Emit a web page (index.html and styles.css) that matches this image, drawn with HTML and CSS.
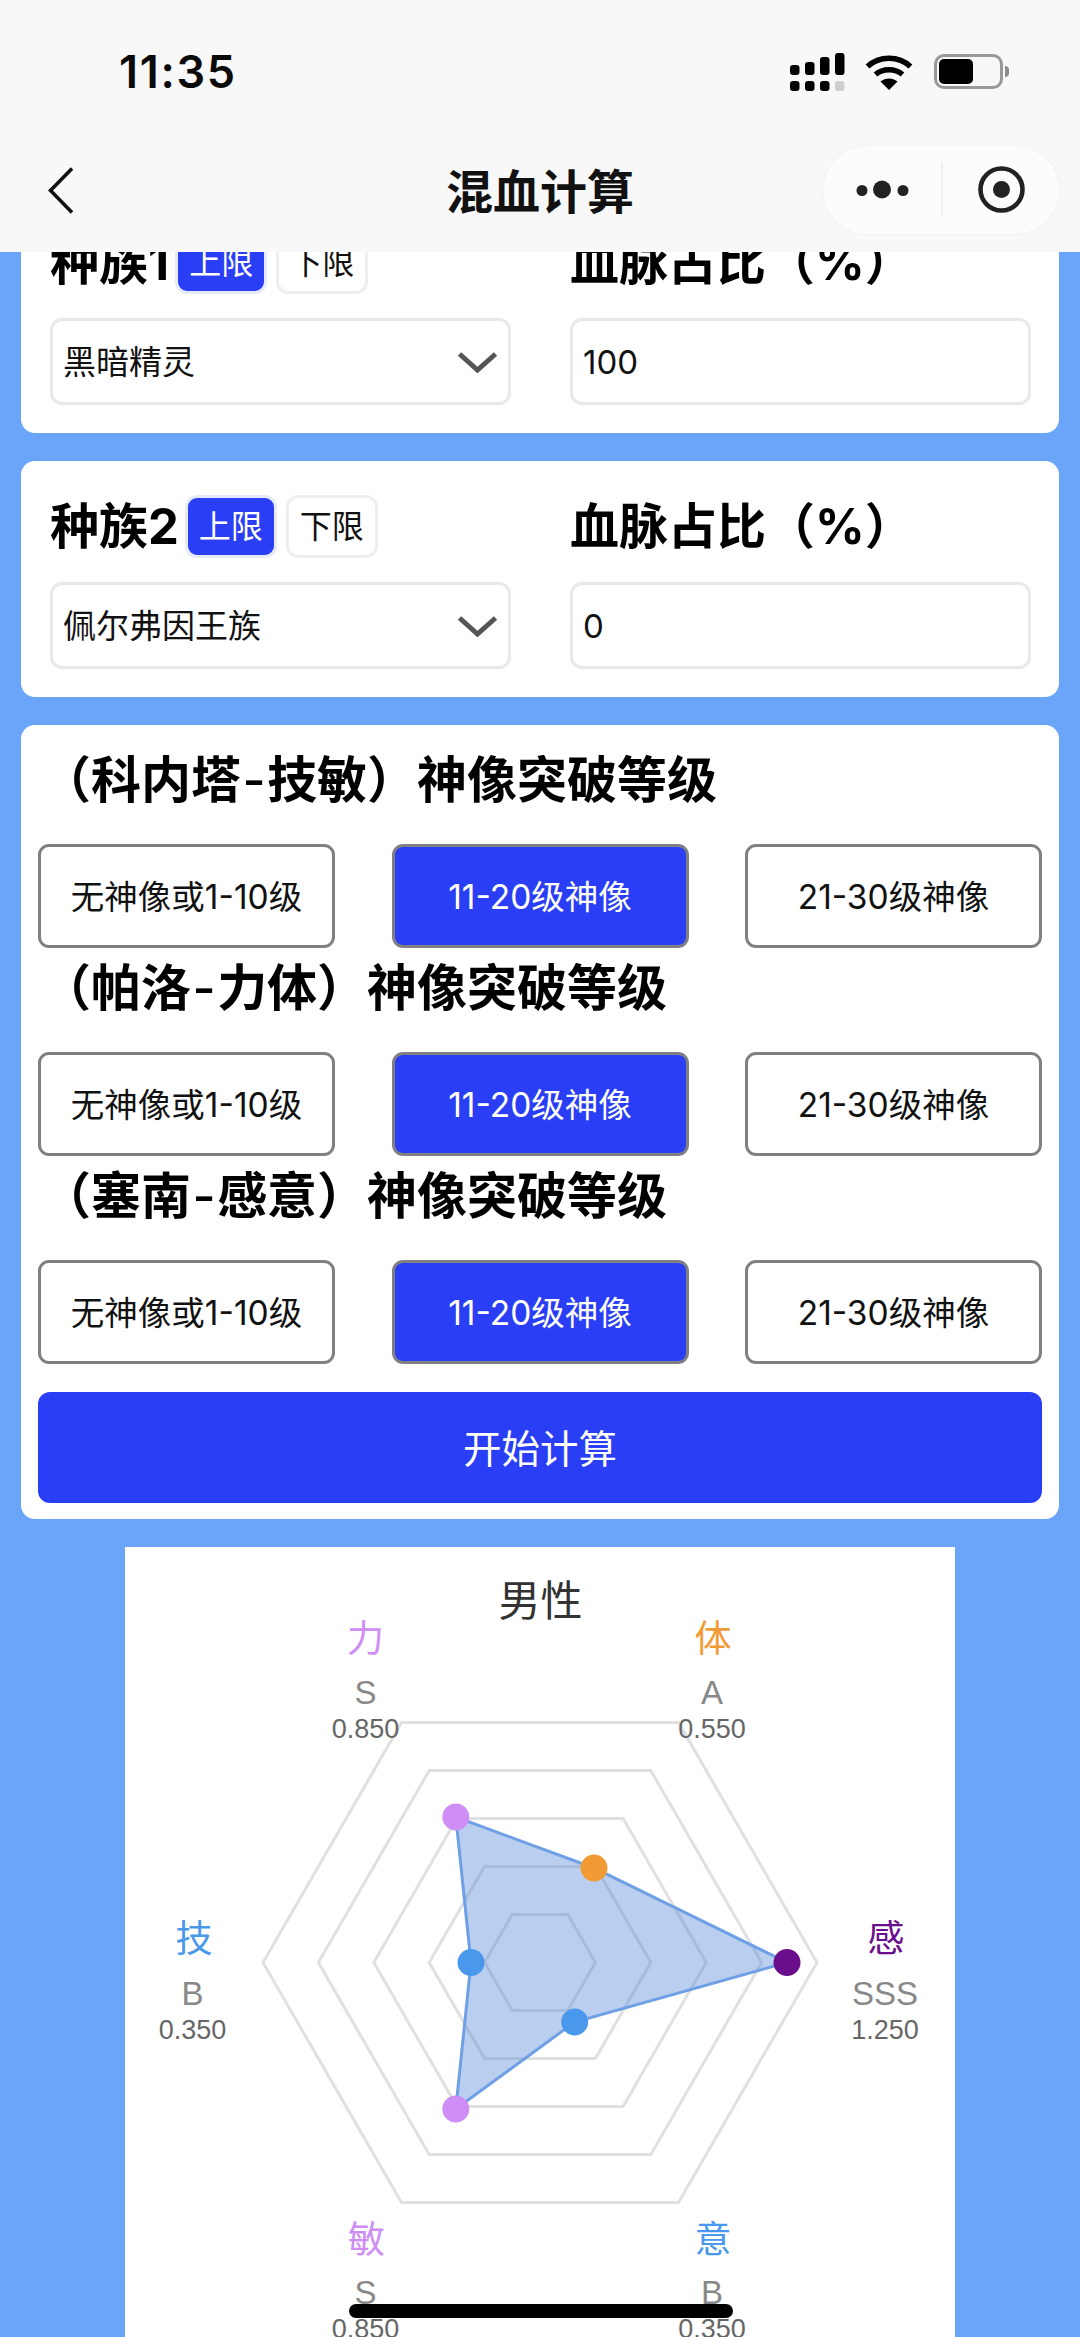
FILE: index.html
```html
<!DOCTYPE html>
<html lang="zh-CN">
<head>
<meta charset="utf-8">
<title>混血计算</title>
<link rel="stylesheet" href="styles.css">
</head>
<body>
<div class="app">
  <header class="top">
    <div class="status">
      <span class="time">11:35</span>
      <div class="status-icons">
        <svg class="signal" width="56" height="40" viewBox="0 0 56 40">
          <rect x="0" y="12" width="9.5" height="10" rx="3"/><rect x="15" y="9" width="9.5" height="13" rx="3"/><rect x="30" y="4" width="9.5" height="18" rx="3"/><rect x="45" y="0" width="9.5" height="22" rx="3"/>
          <rect x="0" y="28" width="9.5" height="10" rx="3"/><rect x="15" y="28" width="9.5" height="10" rx="3"/><rect x="30" y="28" width="9.5" height="10" rx="3"/><rect class="dim" x="45" y="28" width="9.5" height="10" rx="3"/>
        </svg>
        <svg class="wifi" width="48" height="36" viewBox="0 0 48 36">
          <path d="M2.5 11.5C14.5 0.5 33.5 0.5 45.5 11.5" fill="none" stroke="#000" stroke-width="5.5"/>
          <path d="M10.5 19.5C18 13 30 13 37.5 19.5" fill="none" stroke="#000" stroke-width="5.5"/>
          <path d="M15.5 26.5C20.5 22.5 27.5 22.5 32.5 26.5L24 35Z" fill="#000"/>
        </svg>
        <div class="battery"><div class="battery-level"></div></div>
        <div class="battery-nub"></div>
      </div>
    </div>
    <nav class="nav">
      <svg class="back" width="26" height="47" viewBox="0 0 26 47"><path d="M24 1.5L2.5 23.5L24 45.5" fill="none" stroke="#111" stroke-width="3.6"/></svg>
      <h1 class="title">混血计算</h1>
      <div class="capsule">
        <svg width="236" height="88" viewBox="0 0 236 88">
          <circle cx="39" cy="44.5" r="5.5" fill="#222"/><circle cx="59" cy="43.5" r="9" fill="#222"/><circle cx="80" cy="44.5" r="5.5" fill="#222"/>
          <line x1="119" y1="16" x2="119" y2="71" stroke="#ececec" stroke-width="1.5"/>
          <circle cx="178.500" cy="43.500" r="21" fill="none" stroke="#222" stroke-width="4.600"/><circle cx="178.500" cy="43.500" r="8.500" fill="#222"/>
        </svg>
      </div>
    </nav>
  </header>
  <main class="viewport">
    <div class="scroll">
      <section class="card race">
        <div class="field">
          <div class="label-row">
            <h2 class="label">种族1</h2>
            <div class="tags"><span class="tag active">上限</span><span class="tag">下限</span></div>
          </div>
          <div class="control select"><span>黑暗精灵</span><svg class="chev" width="41" height="22" viewBox="0 0 41 22"><path d="M2.500 3L20.500 19L38.500 3" fill="none" stroke="#555" stroke-width="5"/></svg></div>
        </div>
        <div class="field">
          <div class="label-row"><h2 class="label">血脉占比（%）</h2></div>
          <div class="control"><span>100</span></div>
        </div>
      </section>
      <section class="card race">
        <div class="field">
          <div class="label-row">
            <h2 class="label">种族2</h2>
            <div class="tags"><span class="tag active">上限</span><span class="tag">下限</span></div>
          </div>
          <div class="control select"><span>佩尔弗因王族</span><svg class="chev" width="41" height="22" viewBox="0 0 41 22"><path d="M2.500 3L20.500 19L38.500 3" fill="none" stroke="#555" stroke-width="5"/></svg></div>
        </div>
        <div class="field">
          <div class="label-row"><h2 class="label">血脉占比（%）</h2></div>
          <div class="control"><span>0</span></div>
        </div>
      </section>
      <section class="card levels">
        <h2 class="level-title">（科内塔<span class="dash">-</span>技敏）神像突破等级</h2>
        <div class="options"><button class="opt">无神像或1-10级</button><button class="opt on">11-20级神像</button><button class="opt">21-30级神像</button></div>
        <h2 class="level-title">（帕洛<span class="dash">-</span>力体）神像突破等级</h2>
        <div class="options"><button class="opt">无神像或1-10级</button><button class="opt on">11-20级神像</button><button class="opt">21-30级神像</button></div>
        <h2 class="level-title">（塞南<span class="dash">-</span>感意）神像突破等级</h2>
        <div class="options"><button class="opt">无神像或1-10级</button><button class="opt on">11-20级神像</button><button class="opt">21-30级神像</button></div>
        <button class="submit">开始计算</button>
      </section>
      <section class="chart">
        <svg width="830" height="790" viewBox="125 1548 830 790">
          <text class="chart-title" x="540.500" y="1617">男性</text>
          <g class="rings">
            <polygon points="817,1963.500 678.500,2203.400 401.500,2203.400 263,1963.500 401.500,1723.600 678.500,1723.600"/>
            <polygon points="761.600,1963.500 650.800,2155.400 429.200,2155.400 318.400,1963.500 429.200,1771.600 650.800,1771.600"/>
            <polygon points="706.200,1963.500 623.100,2107.400 456.900,2107.400 373.800,1963.500 456.900,1819.600 623.100,1819.600"/>
            <polygon points="650.800,1963.500 595.400,2059.500 484.600,2059.500 429.200,1963.500 484.600,1867.500 595.400,1867.500"/>
            <polygon points="595.400,1963.500 567.700,2011.500 512.300,2011.500 484.600,1963.500 512.300,1915.500 567.700,1915.500"/>
          </g>
          <polygon class="area" points="455.800,1818 594,1869 787,1963.500 574.700,2023 455.800,2110 471,1963.500"/>
          <circle cx="455.800" cy="1818" r="13.500" fill="#cf8ef5"/>
          <circle cx="594" cy="1869" r="13.500" fill="#f29b34"/>
          <circle cx="787" cy="1963.500" r="13.500" fill="#6a0e8c"/>
          <circle cx="574.700" cy="2023" r="13.500" fill="#4a98ec"/>
          <circle cx="455.800" cy="2110" r="13.500" fill="#cf8ef5"/>
          <circle cx="471" cy="1963.500" r="13.500" fill="#4a98ec"/>
          <g class="axis">
            <text class="axis-name" fill="#cf8ef5" x="365.500" y="1653">力</text><text class="grade" x="365.500" y="1705">S</text><text class="score" x="365.500" y="1738.500">0.850</text>
            <text class="axis-name" fill="#f29b34" x="713" y="1653">体</text><text class="grade" x="712" y="1705">A</text><text class="score" x="712" y="1738.500">0.550</text>
            <text class="axis-name" fill="#4a98ec" x="194" y="1953">技</text><text class="grade" x="192.500" y="2006">B</text><text class="score" x="192.500" y="2039.500">0.350</text>
            <text class="axis-name" fill="#6a0e8c" x="886" y="1953">感</text><text class="grade" x="885" y="2006">SSS</text><text class="score" x="885" y="2039.500">1.250</text>
            <text class="axis-name" fill="#cf8ef5" x="366.500" y="2253.500">敏</text><text class="grade" x="365.500" y="2305">S</text><text class="score" x="365.500" y="2338.500">0.850</text>
            <text class="axis-name" fill="#4a98ec" x="713" y="2253.500">意</text><text class="grade" x="712" y="2305">B</text><text class="score" x="712" y="2338.500">0.350</text>
          </g>
        </svg>
      </section>
    </div>
  </main>
  <div class="home-bar"></div>
</div>
</body>
</html>
```

FILE: styles.css
```css
* { box-sizing: border-box; }
html, body { margin: 0; padding: 0; }
body {
  width: 1080px;
  height: 2337px;
  overflow: hidden;
  font-family: Inter, "Noto Sans CJK SC", sans-serif;
  color: #000;
  background: #6aa5fa;
}
.app {
  position: relative;
  width: 1080px;
  height: 2337px;
  display: flex;
  flex-direction: column;
  overflow: hidden;
}
.top { flex: none; height: 252px; background: #f8f8f8; }
.status {
  height: 130px;
  padding: 53px 0 0 119px;
  display: flex;
  justify-content: space-between;
  align-items: flex-start;
}
.time {
  font-size: 45px;
  font-weight: 600;
  line-height: 38px;
  letter-spacing: 1.700px;
  color: #0a0a0a;
}
.status-icons { display: flex; align-items: flex-start; padding-right: 71px; }
.signal rect { fill: #000; }
.signal .dim { fill: #cfcfcf; }
.wifi { margin: 2px 0 0 19px; }
.battery {
  width: 69px;
  height: 35px;
  margin: 1px 0 0 21px;
  border: 3px solid #999;
  border-radius: 10px;
  padding: 2px;
}
.battery-level { width: 34px; height: 100%; background: #000; border-radius: 5px; }
.battery-nub {
  width: 4px;
  height: 11px;
  margin: 13px 0 0 2px;
  background: #8c8c8c;
  border-radius: 0 4px 4px 0;
}
.nav {
  height: 122px;
  display: grid;
  grid-template-columns: minmax(0, 1fr) auto minmax(0, 1fr);
  align-items: center;
}
.back { justify-self: start; margin: 0 0 2px 48px; }
.title {
  margin: 0 0 4px;
  font-family: "Noto Sans CJK SC", sans-serif;
  font-size: 47px;
  font-weight: 700;
  line-height: 60px;
  color: #111;
}
.capsule {
  justify-self: end;
  width: 236px;
  height: 88px;
  margin: 0 21px 2px 0;
  background: #fcfcfc;
  border-radius: 44px;
  box-shadow: 0 0 0 1px #f2f2f2;
}
.capsule svg { display: block; }

.viewport { flex: 1; overflow: hidden; }
.scroll { margin-top: -55px; display: flex; flex-direction: column; }
.card { width: 1038px; margin: 0 21px; background: #fff; border-radius: 14px; }
.race {
  height: 236px;
  margin-bottom: 28px;
  padding: 34px 27px 0 29px;
  display: grid;
  grid-template-columns: 461px 461px;
  column-gap: 59px;
}
.label-row { display: flex; align-items: center; height: 63px; margin-bottom: 24px; }
.label { margin: 0; font-size: 49px; font-weight: 700; line-height: 63px; white-space: nowrap; }
.tags { display: flex; gap: 9px; margin-left: 6px; }
.tag {
  width: 92px;
  height: 63px;
  border: 3px solid #eeeeee;
  border-radius: 12px;
  font-size: 32px;
  line-height: 57px;
  text-align: center;
  background: #fff;
  color: #111;
}
.tag.active { background: #2a3ff5; color: #fff; border-color: #e6eafd; }
.control {
  height: 87px;
  padding: 0 10px;
  display: flex;
  align-items: center;
  justify-content: space-between;
  border: 3px solid #e9e9e9;
  border-radius: 12px;
  font-size: 33px;
  color: #111;
}
.select { padding-bottom: 3px; }
.select .chev { margin-top: 3px; }

.levels { padding: 15px 17px 16px; margin-bottom: 28px; }
.level-title {
  margin: 0 0 25px;
  padding: 1px 0 0 3px;
  font-size: 50px;
  font-weight: 700;
  line-height: 78px;
  white-space: nowrap;
}
.dash { margin: 0 1.500px; font-weight: 500; }
.options { display: flex; justify-content: space-between; }
.opt {
  width: 297px;
  height: 104px;
  padding: 0 0 3px;
  border: 3px solid #808080;
  border-radius: 11px;
  background: #fff;
  color: #111;
  font-family: inherit;
  font-size: 33.500px;
}
.opt.on { background: #2a3ff5; color: #fff; }
.submit {
  display: block;
  width: 100%;
  height: 111px;
  margin-top: 28px;
  padding: 0 0 3px;
  border: none;
  border-radius: 12px;
  background: #2a3ff5;
  color: #fff;
  font-family: inherit;
  font-size: 38.500px;
}
.chart { width: 830px; height: 790px; margin: 0 auto; background: #fff; }
.chart svg { display: block; }
.chart text { text-anchor: middle; font-family: "Liberation Sans", "Noto Sans CJK SC", sans-serif; }
.chart .chart-title { font-size: 42px; fill: #333; font-family: "Noto Sans CJK SC", sans-serif; }
.rings polygon { fill: none; stroke: #e0e0e0; stroke-width: 3; }
.area { fill: rgba(74, 128, 214, 0.38); stroke: #6f9fe5; stroke-width: 3; }
.chart .axis-name { font-size: 37px; font-family: "Noto Sans CJK SC", sans-serif; }
.grade { font-size: 33px; fill: #888; }
.score { font-size: 27px; fill: #666; }
.home-bar {
  position: absolute;
  left: 349px;
  top: 2304px;
  width: 384px;
  height: 14px;
  border-radius: 7px;
  background: #000;
}
```
